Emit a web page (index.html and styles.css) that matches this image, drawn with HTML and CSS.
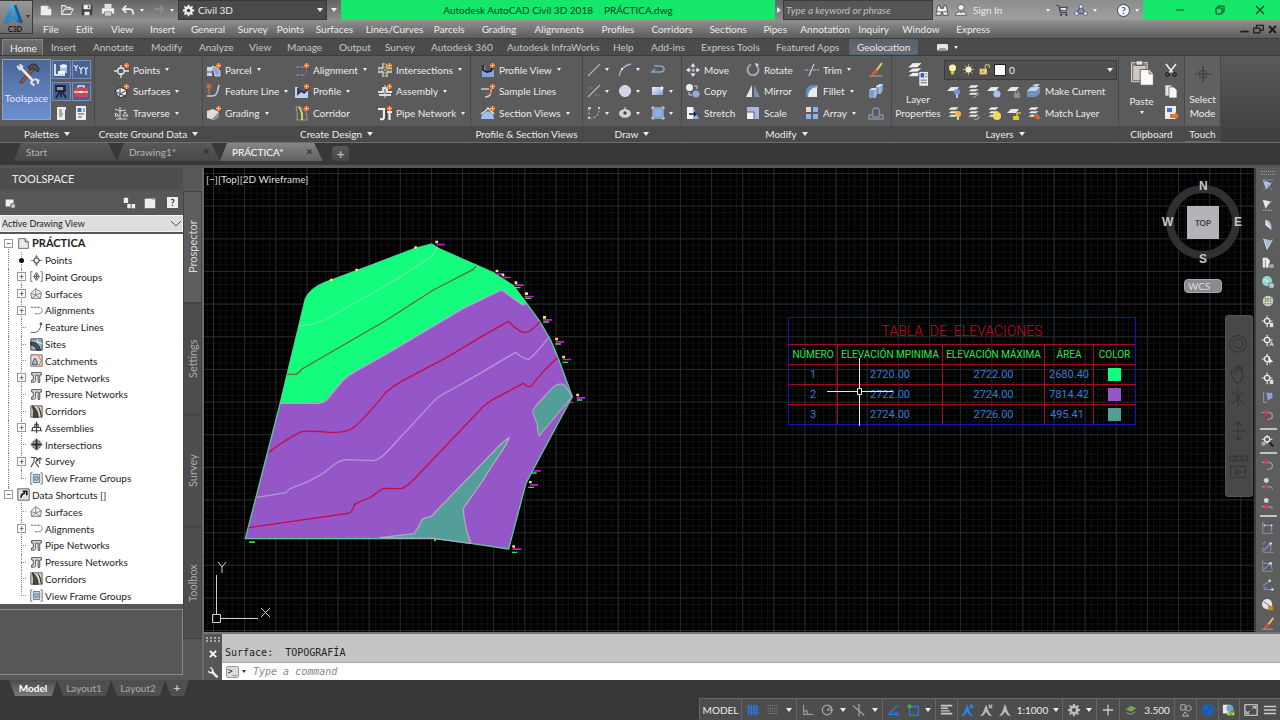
FILE: index.html
```html
<!DOCTYPE html>
<html lang="en">
<head>
<meta charset="utf-8">
<title>Autodesk AutoCAD Civil 3D 2018 - PRÁCTICA.dwg</title>
<meta name="viewport" content="width=device-width, initial-scale=1">
<link rel="stylesheet" href="styles.css">
</head>
<body>
<svg class="sprite" aria-hidden="true">
  <defs>
    <g id="spark"><circle cx="12.5" cy="3.5" r="2.6" fill="#e8641b"/><path d="M12.5 1v5M10 3.5h5" stroke="#ffc79b" stroke-width=".8"/></g>
    <linearGradient id="blue" x1="0" y1="0" x2="1" y2="1"><stop offset="0" stop-color="#f1f4fc"/><stop offset="1" stop-color="#7f9bd0"/></linearGradient>
    <linearGradient id="logo" x1="0" y1="0" x2="0" y2="1"><stop offset="0" stop-color="#4fb4e6"/><stop offset="1" stop-color="#1562a3"/></linearGradient>
  </defs>
  <symbol id="new" viewBox="0 0 16 16"><path d="M2 3h8l4 4v7H2z" fill="#eee"/><path d="M10 3v4h4" fill="#aaa"/></symbol>
  <symbol id="open" viewBox="0 0 16 16"><path d="M2 13V3h4l1 2h5v2M2 13l3-6h10l-3 6z" fill="#777" stroke="#e6e6e6" stroke-width="1.2"/></symbol>
  <symbol id="save" viewBox="0 0 16 16"><path d="M2 2h12v12H2z" fill="#3e3e3e"/><path d="M4 2h8v5H4zM5 10h6v4H5z" fill="#eee"/><path d="M9 3h1.500v3H9z" fill="#444"/></symbol>
  <symbol id="print" viewBox="0 0 16 16"><path d="M4 1h8v5H4z" fill="#ddd"/><path d="M1 6h14v6H1z" fill="#efefef"/><path d="M4 10h8v5H4z" fill="#cfcfcf" stroke="#666" stroke-width=".7"/></symbol>
  <symbol id="undo" viewBox="0 0 16 16"><path d="M6 3L2 7l4 4M2.500 7H10q4 0 4 6" fill="none" stroke="#eee" stroke-width="2"/></symbol>
  <symbol id="redo" viewBox="0 0 16 16"><path d="M10 3l4 4-4 4M13.500 7H4" fill="none" stroke="#8d8d8d" stroke-width="2"/></symbol>
  <symbol id="gear" viewBox="0 0 16 16"><circle cx="8" cy="8" r="3.800" fill="none" stroke="currentColor" stroke-width="3"/><path d="M8 1v3M8 12v3M1 8h3M12 8h3M3 3l2 2M11 11l2 2M13 3l-2 2M5 11l-2 2" stroke="currentColor" stroke-width="2.200"/></symbol>
  <symbol id="binoc" viewBox="0 0 16 16"><path d="M3 3h3v3h4V3h3l2 11H9v-4H7v4H1z" fill="#f0f0f5" stroke="#444" stroke-width="1"/><path d="M2.500 10H6M10 10h3.500" stroke="#444"/></symbol>
  <symbol id="user" viewBox="0 0 16 16"><circle cx="8" cy="5" r="3.500" fill="#f2f2f2" stroke="#555"/><path d="M1.500 14q0-3.500 4.500-4l2 1 2-1q4.500.5 4.500 4z" fill="#f2f2f2" stroke="#555"/></symbol>
  <symbol id="cart" viewBox="0 0 16 16"><path d="M1 3h3l2 8h8M5 5h9l-1.500 4H6z" fill="#dfe3ef" stroke="#444a60" stroke-width="1.300"/><circle cx="7" cy="13.500" r="1.300" fill="#333"/><circle cx="13" cy="13.500" r="1.300" fill="#333"/></symbol>
  <symbol id="a360" viewBox="0 0 16 16"><path d="M8 3.500L3 12h10z" fill="none" stroke="#505b80" stroke-width="1.600"/><circle cx="8" cy="4" r="2.200" fill="#e7eaf4" stroke="#505b80"/><circle cx="3" cy="12" r="2.200" fill="#e7eaf4" stroke="#505b80"/><circle cx="13" cy="12" r="2.200" fill="#e7eaf4" stroke="#505b80"/></symbol>
  <symbol id="min" viewBox="0 0 16 16"><path d="M4 8h8" stroke="currentColor"/></symbol>
  <symbol id="restore" viewBox="0 0 16 16"><path d="M4 6h6v6H4zM6 6V4h6v6h-2" fill="none" stroke="currentColor"/></symbol>
  <symbol id="close" viewBox="0 0 16 16"><path d="M4 4l8 8M12 4l-8 8" stroke="currentColor" stroke-width="1.200"/></symbol>
  <symbol id="min-b" viewBox="0 0 16 16"><path d="M2 11h12" stroke="currentColor" stroke-width="2.500"/></symbol>
  <symbol id="restore-b" viewBox="0 0 16 16"><path d="M1 6h9v7H1zM5 6V2h10v7h-5" fill="none" stroke="currentColor" stroke-width="1.800"/></symbol>
  <symbol id="close-b" viewBox="0 0 16 16"><path d="M3 3l10 10M13 3L3 13" stroke="currentColor" stroke-width="3"/></symbol>

  <symbol id="tools" viewBox="0 0 32 32"><path d="M8 27L24 9" stroke="#5d2b20" stroke-width="4"/><path d="M9 26L23 10" stroke="#a75a44" stroke-width="2"/><path d="M17 7l5-3h5l4 5-1 4-4-1-3-3-3 2z" fill="#4c4c50" stroke="#25252a"/><path d="M7 7l17 18" stroke="#4e5462" stroke-width="5"/><path d="M7 7l17 18" stroke="#e5e8ee" stroke-width="3.500"/><path d="M4 6l3 4 3-3-3-3M23 22l-2 5 4 3M25 22l5 2-1 4" fill="none" stroke="#dfe3ea" stroke-width="2.600"/></symbol>
  <symbol id="p1" viewBox="0 0 16 16"><path d="M2 2v11h3M3 13h9" stroke="#fff" stroke-width="1.500" fill="none"/><path d="M7 4h7v7H7z" fill="#9cc6ee"/><ellipse cx="10.500" cy="4" rx="3.500" ry="1.800" fill="#f0f6ff"/><path d="M5 9h7v3H5z" fill="#fff"/></symbol>
  <symbol id="p2" viewBox="0 0 16 16"><path d="M1 3l2 2.500L5 3M3 5v4M6 5l2 2.500L10 5M8 7v5M11 5l2 2.500L15 5M13 7v6" stroke="#e8eefc" stroke-width="1.200" fill="none"/></symbol>
  <symbol id="p3" viewBox="0 0 16 16"><path d="M3 3h8v5H3zM12 2v7M7 8L3 15M8 8v6M9 8l4 7" stroke="#20263a" stroke-width="1.800" fill="#99a"/></symbol>
  <symbol id="p4" viewBox="0 0 16 16"><path d="M1 5h14v9H1z" fill="#c64a50"/><path d="M5 5V3h6v2M1 9h14" stroke="#f1d2d2" stroke-width="1.300" fill="none"/><path d="M6 8h4v2H6z" fill="#fff"/></symbol>
  <symbol id="p5" viewBox="0 0 16 16"><path d="M4 2h9v3h-1v10H4z" fill="#ececec"/><path d="M6 5h3M6 7h3M6 9h4M6 11h3" stroke="#666"/></symbol>
  <symbol id="p6" viewBox="0 0 16 16"><path d="M3 1h10v14H3z" fill="#eceff5"/><path d="M4.500 3h4v4h-4z" fill="#3a6cc0"/><path d="M10 4h2M10 6h2M5 9h6M5 12h4" stroke="#555"/></symbol>

  <symbol id="points" viewBox="0 0 16 16"><circle cx="7" cy="9" r="3.200" fill="none" stroke="#e6e6e6" stroke-width="1.400"/><path d="M7 3v4M7 11v5M0 9h4M10 9h5" stroke="#e6e6e6" stroke-width="1.300"/><use href="#spark"/></symbol>
  <symbol id="surf" viewBox="0 0 16 16"><path d="M1 8l5-4 7 3-1 6-7 2z" fill="#e3e6ec" stroke="#333"/><path d="M6 4v7l7-4M1 8l5 3-1 4M6 11l6 2" stroke="#444" fill="none"/><use href="#spark"/></symbol>
  <symbol id="trav" viewBox="0 0 16 16"><path d="M1 4l5 2 6-1M6 2v12M2 14h11M2 8l-1 3h4zM11 7l-2 4h5z" fill="none" stroke="#d9d9d9"/></symbol>
  <symbol id="parcel" viewBox="0 0 16 16"><path d="M1 5h5v9H1z" fill="#c8d5ec"/><path d="M6 4q6 1 8 5v5H9q0-5-3-7z" fill="#8da6d8" stroke="#eee" stroke-width=".8"/><path d="M1 10h5" stroke="#555"/><use href="#spark"/></symbol>
  <symbol id="feat" viewBox="0 0 16 16"><path d="M1 13h5q5 0 6-7l1-4" fill="none" stroke="#c9ccd4" stroke-width="1.600"/><circle cx="3" cy="3.500" r="2.400" fill="#e8641b"/><path d="M3 6v5" stroke="#9a9a9a"/></symbol>
  <symbol id="grad" viewBox="0 0 16 16"><path d="M1 6l6-2 6 3v5l-5 3-7-2z" fill="#dcdcdc"/><path d="M6 14l7-7v5l-5 3z" fill="#8d8d8d"/><use href="#spark"/></symbol>
  <symbol id="align" viewBox="0 0 16 16"><path d="M2 5h8M2 13h8" stroke="#7789c9" stroke-width="1.300" stroke-dasharray="3 1.500"/><path d="M10 5q5 4 0 8" fill="none" stroke="#7789c9" stroke-dasharray="2 1.500"/><use href="#spark"/></symbol>
  <symbol id="prof" viewBox="0 0 16 16"><path d="M1 4v11h13V6l-4 4-3-2-3 3V4z" fill="#bcd0f2"/><path d="M4 5v6l3-3 3 2 4-4" stroke="#222b44" stroke-width="1.500" fill="none"/><use href="#spark"/></symbol>
  <symbol id="corr" viewBox="0 0 16 16"><path d="M2 2h4q8 4 7 13H3Q4 8 2 2z" fill="#555c60" stroke="#a0a0a0"/><path d="M5 2q4 5 3 13" stroke="#e9d84c" stroke-width="1.800" fill="none"/><use href="#spark"/></symbol>
  <symbol id="inter" viewBox="0 0 16 16"><path d="M6 1v5H1M10 7V2M6 15v-5H1M10 15v-5h5M10 6h5" fill="none" stroke="#d7d7d7" stroke-width="1.300"/><path d="M8 1v14M1 8h14" stroke="#b8c06a" stroke-dasharray="2 1"/><use href="#spark"/></symbol>
  <symbol id="assem" viewBox="0 0 16 16"><path d="M1 9h5V5h4v4h5M2 12h12" fill="none" stroke="#dcdcdc" stroke-width="2"/><path d="M8 2v13" stroke="#dcdcdc"/><use href="#spark"/></symbol>
  <symbol id="pipe" viewBox="0 0 16 16"><path d="M1 4h6v8q0 3-4 2M10 7h5M12.500 7v8" fill="none" stroke="#efefef" stroke-width="2.200"/><path d="M9 5v10" stroke="#333"/><use href="#spark"/></symbol>
  <symbol id="pview" viewBox="0 0 16 16"><path d="M2 3v12h12V7l-4 3-4-1-2-6z" fill="#7fa6e2"/><path d="M3 3v5l4 2 4-1 2-4" fill="none" stroke="#15203a" stroke-width="1.800"/><use href="#spark"/></symbol>
  <symbol id="sline" viewBox="0 0 16 16"><path d="M1 6h8M5 14q7 0 6-8" fill="none" stroke="#d0d0d0" stroke-width="1.300"/><path d="M5 10h8" stroke="#c44" stroke-width="1.300"/><use href="#spark"/></symbol>
  <symbol id="sview" viewBox="0 0 16 16"><path d="M1 14q0-6 7-8 6 2 6 8z" fill="#9fbdee"/><path d="M1 9q5-3 7-6 3 3 6 6" fill="none" stroke="#fff" stroke-width="1.300"/><use href="#spark"/></symbol>

  <symbol id="line" viewBox="0 0 16 16"><path d="M2 14L14 2" stroke="#a9b0c0" stroke-width="1.200"/></symbol>
  <symbol id="arc" viewBox="0 0 16 16"><path d="M2 14Q4 4 14 2" fill="none" stroke="#a9b5d6" stroke-width="1.300"/><circle cx="5" cy="7" r="1" fill="#fff"/></symbol>
  <symbol id="pline" viewBox="0 0 16 16"><path d="M4 4h6q4 0 4 3t-4 3H2l3-3" fill="none" stroke="#8e9ecb" stroke-width="1.700"/></symbol>
  <symbol id="xline" viewBox="0 0 16 16"><path d="M2 14L14 2" stroke="#b5b5b5" stroke-width="1.200"/><path d="M2 5h5M9 12h5" stroke="#999" stroke-dasharray="1.500 1.500"/></symbol>
  <symbol id="circ" viewBox="0 0 16 16"><circle cx="8" cy="8" r="5.500" fill="#d2d2ea" stroke="#f2f2fa" stroke-width=".8"/></symbol>
  <symbol id="rect" viewBox="0 0 16 16"><path d="M2 4h11v8H2z" fill="url(#blue)"/><path d="M11 3l3 2-3 2z" fill="#fff"/></symbol>
  <symbol id="spl" viewBox="0 0 16 16"><path d="M3 4v9h4q6-2 6-9" fill="none" stroke="#b0b0b0" stroke-dasharray="2 1.500" stroke-width="1.200"/><path d="M2 2h3v2H2zM12 2h2v2h-2zM2 12h2v2H2z" fill="#ccc"/></symbol>
  <symbol id="ell" viewBox="0 0 16 16"><ellipse cx="8" cy="8.500" rx="6" ry="4.200" fill="#d2d2e2"/><circle cx="8" cy="8" r="1.700" fill="#444"/><path d="M8 2v4" stroke="#ddd"/></symbol>
  <symbol id="hatch" viewBox="0 0 16 16"><path d="M4 4h8v8H4z" fill="#86b0ea"/><path d="M3 1v14M13 1v14M1 3h14M1 13h14" stroke="#cfd9ee"/></symbol>

  <symbol id="move" viewBox="0 0 16 16"><path d="M8 3v10M3 8h10" stroke="#b9c3d8" stroke-width="1.300" stroke-dasharray="3 1"/><path d="M8 1l2.500 3.500h-5zM8 15l2.500-3.500h-5zM1 8l3.500-2.500v5zM15 8l-3.500-2.500v5z" fill="#e0e4ee"/></symbol>
  <symbol id="copy" viewBox="0 0 16 16"><circle cx="4.500" cy="4.500" r="3.500" fill="#f0f0f4"/><circle cx="11" cy="11" r="3.600" fill="#92a9d6"/><path d="M4 9v3h3M9 3h3v3" stroke="#ccd" fill="none"/></symbol>
  <symbol id="stretch" viewBox="0 0 16 16"><path d="M2 2h6v12H2z" fill="#f2f4f8"/><path d="M8 2l6 12H8z" fill="#8fb0e6"/><path d="M4 9h7M9 7l2 2-2 2" stroke="#223" fill="none" stroke-width="1.300"/></symbol>
  <symbol id="rotate" viewBox="0 0 16 16"><path d="M6 2.500a5.500 5.500 0 1 0 5 .5" fill="none" stroke="#a9adb8" stroke-width="1.800"/><path d="M10 1l4 1-2.500 3z" fill="#d0d4df"/></symbol>
  <symbol id="mirror" viewBox="0 0 16 16"><path d="M7 2v12H1z" fill="#e5e7ee"/><path d="M9 2v12h6z" fill="#7e8eb2"/></symbol>
  <symbol id="scale" viewBox="0 0 16 16"><path d="M2 2h12v12H2z" fill="#a9b6df"/><path d="M2 7h7v7H2z" fill="#eceff8"/><path d="M2 7h7v7" fill="none" stroke="#5c6480"/></symbol>
  <symbol id="trim" viewBox="0 0 16 16"><path d="M1 8h5M9 8h6" stroke="#8b99c6" stroke-width="1.300" stroke-dasharray="3 1"/><path d="M5 14l5-12" stroke="#c3c8d8" stroke-width="1.300"/></symbol>
  <symbol id="fillet" viewBox="0 0 16 16"><path d="M2 14V10q0-8 8-8h4v3Q8 5 6 14z" fill="#6d8cc4"/><path d="M4 14q0-9 9-10v10z" fill="#e8eaf2"/></symbol>
  <symbol id="array" viewBox="0 0 16 16"><path d="M2 2h5v5H2z" fill="#ead7cc"/><path d="M9 2h5v5H9zM2 9h5v5H2zM9 9h5v5H9z" fill="#8fb3ec"/></symbol>
  <symbol id="erase" viewBox="0 0 16 16"><path d="M14 1L8 9" stroke="#f0c96a" stroke-width="2"/><path d="M8 7l2 2-4 4-3 1 1-3z" fill="#e05a28"/><path d="M1 14h13" stroke="#aaa"/></symbol>
  <symbol id="explode" viewBox="0 0 16 16"><path d="M1 7l3-2h4V3l4-2h3v7l-3 3H9v2l-2 2H1z" fill="#7f9cca"/><path d="M1 7l3-2h5l-2 2zM8 3l4-2h3l-3 3H8z" fill="#d3dff2"/><path d="M7 7v8M12 4v7" stroke="#dde6f5" stroke-width=".8"/></symbol>
  <symbol id="offset" viewBox="0 0 16 16"><path d="M1 14v-4h4q-2-7 3-7t3 7h4v4z" fill="none" stroke="#8791b5" stroke-width="1.400"/><path d="M4 12h8" stroke="#aab"/></symbol>

  <symbol id="layerp" viewBox="0 0 32 32"><path d="M4 9l6-6h11l-6 6zM4 14l6-5h11l-6 5zM4 19l6-5h11l-6 5z" fill="#f0f0f0" stroke="#444" stroke-width=".8"/><path d="M17 13h11v17H17z" fill="#e7eaf2" stroke="#555"/><path d="M19 15h4v5h-4z" fill="#2f5fb5"/><path d="M24.500 16h2M24.500 19h2M19 23h7M19 26h7" stroke="#555"/></symbol>
  <symbol id="bulb" viewBox="0 0 16 16"><circle cx="8" cy="6" r="4.300" fill="#fdf3a2"/><path d="M6 10h4v4H6z" fill="#d8c565"/></symbol>
  <symbol id="sun" viewBox="0 0 16 16"><path d="M8 1v14M1 8h14M3 3l10 10M13 3L3 13" stroke="#c8bb8a"/><circle cx="8" cy="8" r="3.800" fill="#f7efc0"/></symbol>
  <symbol id="lock" viewBox="0 0 16 16"><path d="M2 7h9v7H2z" fill="#e5cf74"/><path d="M9 7V4q0-2 2.500-2T14 4v2" fill="none" stroke="#c9b25c" stroke-width="1.500"/><path d="M6 9v3" stroke="#554"/></symbol>
  <symbol id="ly" viewBox="0 0 16 16"><path d="M1 8l4-4h8l-3 4z" fill="#e8e8e8"/></symbol>
  <symbol id="ls" viewBox="0 0 16 16"><path d="M2 5l3-3h8l-3 3zM2 8.500l3-2.500h8l-3 2.500zM2 12l3-2.500h8L10 12z" fill="#ececec" stroke="#555" stroke-width=".5"/></symbol>
  <symbol id="l1" viewBox="0 0 16 16"><use href="#ly"/><circle cx="11" cy="9" r="3" fill="#6f97d8"/><path d="M11 11v4" stroke="#b8c8e8" stroke-width="2"/></symbol>
  <symbol id="l2" viewBox="0 0 16 16"><use href="#ls"/><path d="M7 15l6-4" stroke="#8898c0" stroke-width="1.500"/></symbol>
  <symbol id="l3" viewBox="0 0 16 16"><use href="#ly"/><circle cx="11" cy="11" r="3.500" fill="#a7c2ee"/></symbol>
  <symbol id="l4" viewBox="0 0 16 16"><use href="#ly"/><path d="M8 10h6v5H8z" fill="#7d9489"/><path d="M9.500 10V8h3v2" stroke="#7d9489" fill="none"/></symbol>
  <symbol id="l5" viewBox="0 0 16 16"><path d="M1 8l4-4h9v6l-4 4H1z" fill="#7391bd"/><path d="M1 8l4-4h9l-4 4zM6 3l3-2h5l-3 3z" fill="#c5d3ea"/></symbol>
  <symbol id="l6" viewBox="0 0 16 16"><use href="#ls"/><circle cx="12" cy="9" r="3" fill="#f0b548"/><path d="M12 11v4" stroke="#e6cf99" stroke-width="2"/></symbol>
  <symbol id="l7" viewBox="0 0 16 16"><use href="#ls"/><path d="M8 14q5 1 5-3" fill="none" stroke="#7e92cd" stroke-width="1.500"/></symbol>
  <symbol id="l8" viewBox="0 0 16 16"><use href="#ls"/><circle cx="11" cy="11" r="4" fill="#f6dc5c"/></symbol>
  <symbol id="l9" viewBox="0 0 16 16"><use href="#ly"/><path d="M7 11h6v4H7z" fill="#e0c52f"/><path d="M11 11V8h4" stroke="#e0c52f" stroke-width="1.500" fill="none"/></symbol>
  <symbol id="l10" viewBox="0 0 16 16"><use href="#ls"/><path d="M8 9h3l4 4-3 2-4-3z" fill="#c8663a"/></symbol>
  <symbol id="paste" viewBox="0 0 32 32"><path d="M4 4h18v22H4z" fill="#8b8078" stroke="#ddd"/><path d="M9 2h8v5H9z" fill="#e4e4e4" stroke="#444"/><path d="M6 8h14v16H6z" fill="#cfc8c2"/><path d="M14 12h10l5 5v13H14z" fill="#fafafa" stroke="#555"/><path d="M24 12v5h5" fill="#ccc" stroke="#777"/></symbol>
  <symbol id="cut" viewBox="0 0 16 16"><path d="M3 2l7 9M13 2L6 11" stroke="#eee" stroke-width="1.600"/><circle cx="4.500" cy="12.500" r="1.800" fill="none" stroke="#222" stroke-width="1.300"/><circle cx="11.500" cy="12.500" r="1.800" fill="none" stroke="#222" stroke-width="1.300"/></symbol>
  <symbol id="copyc" viewBox="0 0 16 16"><path d="M2 2h7v11H2z" fill="#e3e3e3" stroke="#555" stroke-width=".6"/><path d="M6 4h5l3 3v8H6z" fill="#fafafa" stroke="#555" stroke-width=".7"/></symbol>
  <symbol id="pspec" viewBox="0 0 16 16"><path d="M2 1h11v13H2z" fill="#e8ebf2"/><path d="M4 3h5v4H4z" fill="#4674bd"/><path d="M7 9h5v-2l4 4-4 4v-2H7z" fill="#e07a30"/></symbol>
  <symbol id="touch" viewBox="0 0 32 32"><path d="M16 6v20M6 16h20" stroke="#3c3c3c" stroke-width="1.500"/><path d="M12 12h8v8h-8z" fill="none" stroke="#3c3c3c"/></symbol>

  <symbol id="t-dwg" viewBox="0 0 16 16"><path d="M2 2h8l4 4v8H2z" fill="#e9e9e9" stroke="#555"/><path d="M10 2v4h4" fill="#bbb" stroke="#555"/></symbol>
  <symbol id="t-pt" viewBox="0 0 16 16"><path d="M8 2l4 6-4 6-4-6z" fill="none" stroke="#555"/><path d="M8 1v14M1 8h14" stroke="#666"/><circle cx="8" cy="8" r="3" fill="#eee" stroke="#444"/></symbol>
  <symbol id="t-pg" viewBox="0 0 16 16"><path d="M3 2H1v12h2M13 2h2v12h-2" fill="none" stroke="#555"/><path d="M8 3l3.500 5L8 13 4.500 8z" fill="#ddd" stroke="#444"/><path d="M8 5v6M5 8h6" stroke="#444"/></symbol>
  <symbol id="t-sf" viewBox="0 0 16 16"><path d="M1 8l6-6 7 5-1 7H2z" fill="#eee" stroke="#666"/><path d="M1 8l6 2 7-3M7 2v8l-5 4M7 10l6 4" fill="none" stroke="#777"/></symbol>
  <symbol id="t-al" viewBox="0 0 16 16"><path d="M1 4h9q5 0 5 4t-5 4H6" fill="none" stroke="#666" stroke-width="1.200" stroke-dasharray="3 1"/></symbol>
  <symbol id="t-fl" viewBox="0 0 16 16"><path d="M1 14h5q6 0 8-11" fill="none" stroke="#555" stroke-width="1.200"/><path d="M12 2h3v3h-3z" fill="#555"/></symbol>
  <symbol id="t-si" viewBox="0 0 16 16"><path d="M1 1h14v14H1z" fill="#8fb4d6" stroke="#333"/><path d="M1 5q10 0 12 10H8Q7 9 1 9z" fill="#4a5648" stroke="#222"/><path d="M9 1v4l6 2" stroke="#fff" fill="none"/></symbol>
  <symbol id="t-ca" viewBox="0 0 16 16"><path d="M1 1h14v14H1z" fill="#f0d9cc" stroke="#555"/><path d="M6 5q4 4 3 8H3q0-4 3-8z" fill="#8cbbe8" stroke="#345"/><path d="M10 2l4 6-3 6" stroke="#c2532c" fill="none"/></symbol>
  <symbol id="t-pn" viewBox="0 0 16 16"><path d="M2 2h12v3H12v9h-2V5H7v7q0 2-5 2v-3h2V5H2z" fill="#ddd" stroke="#333"/></symbol>
  <symbol id="t-co" viewBox="0 0 16 16"><path d="M1 1h14v14H1z" fill="#ddd6c5" stroke="#444"/><path d="M3 1q7 5 7 14H4Q5 8 3 1zM10 2q4 5 4 13" fill="#454a44" stroke="#222"/></symbol>
  <symbol id="t-as" viewBox="0 0 16 16"><path d="M1 12h14M3 8h10M6 4h4v4H6zM8 1v14M3 8v4M13 8v4" fill="none" stroke="#444" stroke-width="1.500"/></symbol>
  <symbol id="t-in" viewBox="0 0 16 16"><circle cx="8" cy="8" r="6" fill="#555"/><path d="M6 0v6H0M10 0v6h6M6 16v-6H0M10 16v-6h6" stroke="#ddd" fill="none"/><path d="M8 1v14M1 8h14" stroke="#333" stroke-width="2"/></symbol>
  <symbol id="t-su" viewBox="0 0 16 16"><path d="M1 3h6l2 2h6M5 4v4l-4 7M9 5l-2 5 4 5M7 9l6-6M12 6v5" fill="none" stroke="#444" stroke-width="1.300"/></symbol>
  <symbol id="t-vf" viewBox="0 0 16 16"><path d="M3 1H1v14h2M13 1h2v14h-2" fill="none" stroke="#456"/><path d="M4 3h8v10H4z" fill="#b9d3ea" stroke="#567"/><path d="M6 6h4v4H6z" fill="none" stroke="#567"/></symbol>
  <symbol id="t-sc" viewBox="0 0 16 16"><path d="M1 1h14v14H1z" fill="#e2e2e2" stroke="#444"/><path d="M5 12q0-5 5-6M7 4h5v5" fill="none" stroke="#111" stroke-width="2"/></symbol>

  <symbol id="r1" viewBox="0 0 16 16"><path d="M2 1l10 4-6 7z" fill="#c5cdea"/><path d="M2 13L13 3M2 1h12M2 1l11 12" stroke="#7f8fc4"/></symbol>
  <symbol id="r2" viewBox="0 0 16 16"><path d="M2 2l3 10 6-8z" fill="#e4e6ee"/><path d="M5 12L13 3M2 14h12" stroke="#b5b9c8" stroke-dasharray="2 1"/></symbol>
  <symbol id="r3" viewBox="0 0 16 16"><path d="M5 2q8 1 7 12l-5-4z" fill="#b4c0e6"/><path d="M5 2v6l6 4" fill="#e9ebf4"/></symbol>
  <symbol id="r4" viewBox="0 0 16 16"><path d="M3 2l9 2-5 10z" fill="#a7b5db"/><path d="M3 2l4 12 6-11" stroke="#e5e7f2" fill="none"/></symbol>
  <symbol id="r5" viewBox="0 0 16 16"><path d="M2 2h5l3 3v8H2z" fill="#f0f0f0"/><path d="M9 9h6v5H9z" fill="#aaa" stroke="#444" stroke-width=".6"/><path d="M5 4v9" stroke="#777"/></symbol>
  <symbol id="r6" viewBox="0 0 16 16"><circle cx="7" cy="7" r="5.800" fill="#8fd6cf"/><path d="M3 5q4 0 6 4" stroke="#e8fff9" fill="none"/><path d="M9 9h6v6H9z" fill="#cbd" stroke="#444" stroke-width=".6"/></symbol>
  <symbol id="r7" viewBox="0 0 16 16"><circle cx="8" cy="8" r="6" fill="#dfe7dc"/><path d="M8 2v12M2 8h12M3 5h10M3 11h10M5 3v10M11 3v10" stroke="#7c8d7c" stroke-width=".8"/><path d="M5 5h3v3H5z" fill="#8fb440"/></symbol>
  <symbol id="r8" viewBox="0 0 16 16"><circle cx="7" cy="8" r="3" fill="none" stroke="#eee" stroke-width="1.400"/><path d="M7 2v3M7 11v4M1 8h3M10 8h3" stroke="#eee" stroke-width="1.300"/><path d="M10 10h4v5h-4z" fill="#ddd"/></symbol>
  <symbol id="r9" viewBox="0 0 16 16"><circle cx="7" cy="8" r="3" fill="none" stroke="#eee" stroke-width="1.400"/><path d="M7 2v3M7 11v4M1 8h3M10 8h3" stroke="#eee" stroke-width="1.300"/><path d="M10 15l2-5 2 5M11 13h2" stroke="#eee" fill="none"/></symbol>
  <symbol id="r10" viewBox="0 0 16 16"><circle cx="7" cy="8" r="3" fill="none" stroke="#eee" stroke-width="1.400"/><path d="M7 2v3M7 11v4M1 8h3" stroke="#eee" stroke-width="1.300"/><path d="M8 6l6 5-3 .500-1 3z" fill="#fff"/></symbol>
  <symbol id="r11" viewBox="0 0 16 16"><circle cx="7" cy="6" r="3" fill="none" stroke="#eee" stroke-width="1.400"/><path d="M7 1v3M7 8v3M1 6h3M10 6h3" stroke="#eee" stroke-width="1.300"/><circle cx="3" cy="11" r="2.500" fill="#aaa"/><path d="M10 10l4 4" stroke="#1c1c1c" stroke-width="2.500"/></symbol>
  <symbol id="r12" viewBox="0 0 16 16"><path d="M3 3v11M3 14h4" stroke="#b7bfdd" stroke-dasharray="2 1"/><path d="M6 3h7v6l-5 3z" fill="#8ba1d9"/></symbol>
  <symbol id="r13" viewBox="0 0 16 16"><path d="M1 4h8q4 0 4 4t-6 4" fill="none" stroke="#a3a3a3" stroke-width="1.300"/><path d="M6 4v10" stroke="#b52c36" stroke-width="1.500"/><circle cx="6" cy="4" r="2.200" fill="#e4374a"/></symbol>
  <symbol id="r14" viewBox="0 0 16 16"><path d="M1 5h8q4 0 4 4t-6 4" fill="none" stroke="#a3a3a3" stroke-width="1.300"/><circle cx="6" cy="5" r="2.200" fill="#e4374a"/></symbol>
  <symbol id="r15" viewBox="0 0 16 16"><path d="M1 11h8q4 0 4 3" fill="none" stroke="#8aa0b2" stroke-width="1.300"/><circle cx="6" cy="4" r="2.800" fill="#d5d5d5"/><circle cx="6" cy="11" r="2.200" fill="#e4374a"/></symbol>
  <symbol id="r16" viewBox="0 0 16 16"><path d="M2 1v13h12" fill="none" stroke="#b6b6c8" stroke-dasharray="2 1"/><path d="M4 5h8v7" stroke="#7d8ccc" fill="none" stroke-width="1.400"/><path d="M3 4h2v2H3zM11 4h2v2h-2z" fill="#dde"/></symbol>
  <symbol id="r17" viewBox="0 0 16 16"><path d="M2 9v5h12" fill="none" stroke="#b6b6c8" stroke-dasharray="2 1"/><path d="M3 12l8-8v8M2 5l3-3" stroke="#7d8ccc" fill="none" stroke-width="1.400"/><circle cx="11" cy="4" r="1.500" fill="#dde"/></symbol>
  <symbol id="r18" viewBox="0 0 16 16"><circle cx="7" cy="7" r="5.800" fill="#e4e4e4"/><path d="M3 4l8 6" stroke="#666"/><path d="M8 9h6v5H8z" fill="#c98432"/></symbol>
  <symbol id="r19" viewBox="0 0 16 16"><path d="M2 2v12h12" fill="none" stroke="#b6b6c8" stroke-dasharray="2 1"/><path d="M3 5h8l2 7M3 12l8-7" stroke="#7d8ccc" fill="none" stroke-width="1.400"/><circle cx="11" cy="5" r="1.500" fill="#dde"/></symbol>
  <symbol id="r20" viewBox="0 0 16 16"><path d="M3 12h10M2 8l8-6M6 9l-3 3" stroke="#7d8ccc" fill="none" stroke-width="1.400"/><circle cx="10" cy="2" r="1.500" fill="#dde"/><circle cx="13" cy="12" r="1.500" fill="#dde"/></symbol>

  <symbol id="s-grid" viewBox="0 0 16 16"><path d="M3 2v12M6 2v12M9 2v12M12 2v12" stroke="#2b78e4" stroke-width="1.700"/><path d="M1 5h14M1 8h14M1 11h14" stroke="#2b78e4" stroke-width=".8"/></symbol>
  <symbol id="s-snap" viewBox="0 0 16 16"><path d="M2 3h12M2 6h12M2 9h12M2 12h12" stroke="#a6a6a6" stroke-dasharray="1 1.500"/></symbol>
  <symbol id="s-orth" viewBox="0 0 16 16"><path d="M3 2v11h11M3 9h4v4" fill="none" stroke="#9c9c9c" stroke-width="1.300"/></symbol>
  <symbol id="s-pol" viewBox="0 0 16 16"><circle cx="7" cy="8" r="5.500" fill="none" stroke="#aaa" stroke-width="1.300"/><path d="M7 8h7M7 8l5-4" stroke="#bbb"/></symbol>
  <symbol id="s-iso" viewBox="0 0 16 16"><path d="M1 3l13 11M8 1v14" stroke="#aaa" stroke-width="1.300"/></symbol>
  <symbol id="s-otr" viewBox="0 0 16 16"><path d="M12 3L2 13h12" fill="none" stroke="#2b78e4" stroke-width="1.500"/><path d="M8 11h4v4" fill="none" stroke="#2b78e4"/></symbol>
  <symbol id="s-osn" viewBox="0 0 16 16"><path d="M4 4h10v10H4z" fill="none" stroke="#2b78e4" stroke-width="1.500"/><circle cx="4" cy="4" r="2.500" fill="#2fae4a"/></symbol>
  <symbol id="s-lw" viewBox="0 0 16 16"><path d="M1 3h13M1 12h13" stroke="#ccc" stroke-width="2"/><path d="M1 6h8M1 9h10" stroke="#ccc" stroke-width="1.500"/></symbol>
  <symbol id="s-ann" viewBox="0 0 16 16"><path d="M8 1q2 5 2 6 1 4 5 8l-4-1-3-4-3 4-4 1q4-4 5-8 0-1 2-6z" fill="currentColor"/></symbol>
  <symbol id="s-ann2" viewBox="0 0 16 16"><path d="M7 2q2 5 2 6 1 3 5 7l-4-1-3-4-3 4-4 1q4-4 5-8 0-1 2-5z" fill="currentColor"/><path d="M10 2l4 4M14 2l-4 4" stroke="currentColor" stroke-width="1.500"/></symbol>
  <symbol id="s-plus" viewBox="0 0 16 16"><path d="M8 2v12M2 8h12" stroke="#ccc" stroke-width="1.500"/></symbol>
  <symbol id="s-elev" viewBox="0 0 16 16"><path d="M2 7l6-4 6 3-6 4z" fill="#7ea653"/><path d="M3 11l5 2 5-3" stroke="#aaa" fill="none"/></symbol>
  <symbol id="s-iso2" viewBox="0 0 16 16"><path d="M2 2h5v6H2zM7 10l4 5H4z" fill="none" stroke="#bbb"/><circle cx="11" cy="6" r="3" fill="none" stroke="#bbb"/></symbol>
  <symbol id="s-hw" viewBox="0 0 16 16"><circle cx="8" cy="8" r="7" fill="#1b67c2"/><path d="M5 11l6-6" stroke="#114a92" stroke-width="1.500"/><circle cx="8" cy="8" r="5" fill="none" stroke="#0f4f9f"/></symbol>
  <symbol id="s-map" viewBox="0 0 16 16"><path d="M1 2h8v10H1z" fill="#e7e7e7"/><circle cx="9" cy="6" r="4" fill="#6ba3d8"/><path d="M6 10h8v4H6z" fill="#d8d34e"/><path d="M8 10l2 3 4-5" stroke="#46a53a" stroke-width="1.500" fill="none"/></symbol>
  <symbol id="s-full" viewBox="0 0 16 16"><path d="M1 2h14v12H1z" fill="none" stroke="#ddd" stroke-width="1.300"/><path d="M9 7l4-3M13 7V4h-3M7 9l-4 3M3 9v3h3" stroke="#ddd" fill="none"/></symbol>
  <symbol id="s-menu" viewBox="0 0 16 16"><path d="M1 4h14M1 8h14M1 12h14" stroke="#ccc" stroke-width="1.500"/></symbol>
  <symbol id="wrench" viewBox="0 0 16 16"><path d="M13 14L6 7" stroke="#eee" stroke-width="3"/><path d="M3 2l3 2v3H3L1 5q0 5 5 4 4-2 1-6-2-2-4-1z" fill="#eee"/></symbol>
  <symbol id="ts-tree" viewBox="0 0 16 16"><path d="M2 2h5v6H2zM6 9h4v5H6zM11 9h4v5h-4z" fill="#eee"/></symbol>
  <symbol id="ts-pane" viewBox="0 0 16 16"><path d="M2 3h12v11H2z" fill="#eee"/><path d="M10 3h4" stroke="#888" stroke-width="2"/></symbol>
  <symbol id="ts-item" viewBox="0 0 16 16"><path d="M3 4h9v8H3z" fill="#eee"/><path d="M9 9h5v5H9z" fill="#ccc" stroke="#555"/></symbol>
</svg>

<div class="app">
  <button class="app-menu" aria-label="Application menu">
    <svg viewBox="0 0 32 27"><path d="M4 26L13 2h7l8 22h-7L16 9l-5 15z" fill="url(#logo)"/><path d="M8 19l14-5 2 6-14 3-6 3z" fill="#2b8fce"/><path d="M20 2l8 22-3 1L17 3z" fill="#155888"/></svg>
    <b>C3D</b><i class="car dark"></i>
  </button>

  <header class="title">
    <div class="quick">
      <button aria-label="New"><svg><use href="#new"/></svg></button>
      <button aria-label="Open"><svg><use href="#open"/></svg></button>
      <button aria-label="Save"><svg><use href="#save"/></svg></button>
      <button aria-label="Plot"><svg><use href="#print"/></svg></button>
      <button aria-label="Undo"><svg><use href="#undo"/></svg><i class="car"></i></button>
      <button aria-label="Redo"><svg><use href="#redo"/></svg><i class="car"></i></button>
    </div>
    <div class="workspace"><svg><use href="#gear"/></svg><select aria-label="Workspace"><option>Civil 3D</option></select><i class="car big"></i></div>
    <button class="more" aria-label="Customize toolbar"><i class="car big"></i></button>
    <h1><span>Autodesk AutoCAD Civil 3D 2018</span><span>PRÁCTICA.dwg</span></h1>
    <button class="play" aria-label="Collapse search"></button>
    <input class="search" type="text" placeholder="Type a keyword or phrase" aria-label="Search">
    <div class="account">
      <button aria-label="Search help"><svg><use href="#binoc"/></svg></button>
      <button class="sign"><svg><use href="#user"/></svg>Sign In<i class="car"></i></button>
      <button aria-label="App store"><svg><use href="#cart"/></svg></button>
      <button aria-label="Autodesk 360"><svg><use href="#a360"/></svg><i class="car"></i></button>
      <button class="help" aria-label="Help"><b>?</b><i class="car"></i></button>
    </div>
    <div class="win">
      <button aria-label="Minimize"><svg><use href="#min"/></svg></button>
      <button aria-label="Restore"><svg><use href="#restore"/></svg></button>
      <button aria-label="Close"><svg><use href="#close"/></svg></button>
    </div>
  </header>

  <nav class="menus">
    <button>File</button><button>Edit</button><button>View</button><button>Insert</button><button>General</button><button>Survey</button><button>Points</button><button>Surfaces</button><button>Lines/Curves</button><button>Parcels</button><button>Grading</button><button>Alignments</button><button>Profiles</button><button>Corridors</button><button>Sections</button><button>Pipes</button><button>Annotation</button><button>Inquiry</button><button>Window</button><button>Express</button>
    <div class="docwin"><button aria-label="Minimize drawing"><svg><use href="#min-b"/></svg></button><button aria-label="Restore drawing"><svg><use href="#restore-b"/></svg></button><button aria-label="Close drawing"><svg><use href="#close-b"/></svg></button></div>
  </nav>

  <nav class="tabs">
    <button class="on">Home</button><button>Insert</button><button>Annotate</button><button>Modify</button><button>Analyze</button><button>View</button><button>Manage</button><button>Output</button><button>Survey</button><button>Autodesk 360</button><button>Autodesk InfraWorks</button><button>Help</button><button>Add-ins</button><button>Express Tools</button><button>Featured Apps</button><button class="geo">Geolocation</button><button class="pill" aria-label="Minimize ribbon"><i></i><i class="car"></i></button>
  </nav>

  <section class="ribbon">
    <div class="panel palettes">
      <div class="body">
        <button class="large active"><svg><use href="#tools"/></svg>Toolspace</button>
        <button class="sq lit" aria-label="Panorama"><svg><use href="#p1"/></svg></button>
        <button class="sq lit" aria-label="Survey"><svg><use href="#p3"/></svg></button>
        <button class="sq" aria-label="Tool palettes"><svg><use href="#p5"/></svg></button>
        <button class="sq lit" aria-label="Prospector"><svg><use href="#p2"/></svg></button>
        <button class="sq lit" aria-label="Toolbox"><svg><use href="#p4"/></svg></button>
        <button class="sq" aria-label="Properties"><svg><use href="#p6"/></svg></button>
      </div>
      <h2>Palettes<i class="car big"></i></h2>
    </div>
    <div class="panel ground">
      <div class="body">
        <button class="cmd"><svg><use href="#points"/></svg>Points<i class="car"></i></button>
        <button class="cmd"><svg><use href="#surf"/></svg>Surfaces<i class="car"></i></button>
        <button class="cmd"><svg><use href="#trav"/></svg>Traverse<i class="car"></i></button>
      </div>
      <h2>Create Ground Data<i class="car big"></i></h2>
    </div>
    <div class="panel design">
      <div class="body">
        <button class="cmd"><svg><use href="#parcel"/></svg>Parcel<i class="car"></i></button>
        <button class="cmd"><svg><use href="#feat"/></svg>Feature Line<i class="car"></i></button>
        <button class="cmd"><svg><use href="#grad"/></svg>Grading<i class="car"></i></button>
        <button class="cmd"><svg><use href="#align"/></svg>Alignment<i class="car"></i></button>
        <button class="cmd"><svg><use href="#prof"/></svg>Profile<i class="car"></i></button>
        <button class="cmd"><svg><use href="#corr"/></svg>Corridor</button>
        <button class="cmd"><svg><use href="#inter"/></svg>Intersections<i class="car"></i></button>
        <button class="cmd"><svg><use href="#assem"/></svg>Assembly<i class="car"></i></button>
        <button class="cmd"><svg><use href="#pipe"/></svg>Pipe Network<i class="car"></i></button>
      </div>
      <h2>Create Design<i class="car big"></i></h2>
    </div>
    <div class="panel views">
      <div class="body">
        <button class="cmd"><svg><use href="#pview"/></svg>Profile View<i class="car"></i></button>
        <button class="cmd"><svg><use href="#sline"/></svg>Sample Lines</button>
        <button class="cmd"><svg><use href="#sview"/></svg>Section Views<i class="car"></i></button>
      </div>
      <h2>Profile &amp; Section Views</h2>
    </div>
    <div class="panel draw">
      <div class="body">
        <button class="cmd" aria-label="Line"><svg><use href="#line"/></svg><i class="car"></i></button>
        <button class="cmd" aria-label="Construction line"><svg><use href="#xline"/></svg><i class="car"></i></button>
        <button class="cmd" aria-label="Polyline"><svg><use href="#spl"/></svg><i class="car"></i></button>
        <button class="cmd" aria-label="Arc"><svg><use href="#arc"/></svg><i class="car"></i></button>
        <button class="cmd" aria-label="Circle"><svg><use href="#circ"/></svg><i class="car"></i></button>
        <button class="cmd" aria-label="Ellipse"><svg><use href="#ell"/></svg><i class="car"></i></button>
        <button class="cmd" aria-label="Curve"><svg><use href="#pline"/></svg></button>
        <button class="cmd" aria-label="Rectangle"><svg><use href="#rect"/></svg><i class="car"></i></button>
        <button class="cmd" aria-label="Hatch"><svg><use href="#hatch"/></svg><i class="car"></i></button>
      </div>
      <h2>Draw<i class="car big"></i></h2>
    </div>
    <div class="panel modify">
      <div class="body">
        <button class="cmd"><svg><use href="#move"/></svg>Move</button>
        <button class="cmd"><svg><use href="#copy"/></svg>Copy</button>
        <button class="cmd"><svg><use href="#stretch"/></svg>Stretch</button>
        <button class="cmd"><svg><use href="#rotate"/></svg>Rotate</button>
        <button class="cmd"><svg><use href="#mirror"/></svg>Mirror</button>
        <button class="cmd"><svg><use href="#scale"/></svg>Scale</button>
        <button class="cmd"><svg><use href="#trim"/></svg>Trim<i class="car"></i></button>
        <button class="cmd"><svg><use href="#fillet"/></svg>Fillet<i class="car"></i></button>
        <button class="cmd"><svg><use href="#array"/></svg>Array<i class="car"></i></button>
        <button class="cmd" aria-label="Erase"><svg><use href="#erase"/></svg></button>
        <button class="cmd" aria-label="Explode"><svg><use href="#explode"/></svg></button>
        <button class="cmd" aria-label="Offset"><svg><use href="#offset"/></svg></button>
      </div>
      <h2>Modify<i class="car big"></i></h2>
    </div>
    <div class="panel layers">
      <div class="body">
        <button class="large"><svg><use href="#layerp"/></svg>Layer<br>Properties</button>
        <div class="layer-rows">
          <div class="combo"><svg><use href="#bulb"/></svg><svg><use href="#sun"/></svg><svg><use href="#lock"/></svg><span class="chip"></span><select aria-label="Current layer"><option>0</option></select><i class="car big"></i></div>
          <div class="row"><button aria-label="Layer off"><svg><use href="#l1"/></svg></button><button aria-label="Isolate"><svg><use href="#l2"/></svg></button><button aria-label="Freeze"><svg><use href="#l3"/></svg></button><button aria-label="Lock"><svg><use href="#l4"/></svg></button><button class="cmd"><svg><use href="#l5"/></svg>Make Current</button></div>
          <div class="row"><button aria-label="Layers on"><svg><use href="#l6"/></svg></button><button aria-label="Unisolate"><svg><use href="#l7"/></svg></button><button aria-label="Thaw"><svg><use href="#l8"/></svg></button><button aria-label="Unlock"><svg><use href="#l9"/></svg></button><button class="cmd"><svg><use href="#l10"/></svg>Match Layer</button></div>
        </div>
      </div>
      <h2>Layers<i class="car big"></i></h2>
    </div>
    <div class="panel clip">
      <div class="body">
        <button class="large"><svg><use href="#paste"/></svg>Paste<i class="car"></i></button>
        <button class="sq" aria-label="Cut"><svg><use href="#cut"/></svg></button>
        <button class="sq" aria-label="Copy"><svg><use href="#copyc"/></svg></button>
        <button class="sq" aria-label="Paste special"><svg><use href="#pspec"/></svg></button>
      </div>
      <h2>Clipboard</h2>
    </div>
    <div class="panel touch">
      <div class="body"><button class="large"><svg><use href="#touch"/></svg>Select<br>Mode</button></div>
      <h2>Touch</h2>
    </div>
  </section>

  <nav class="files">
    <button>Start</button>
    <button>Drawing1*<i>✕</i></button>
    <button class="on">PRÁCTICA*<i>✕</i></button>
    <button class="add" aria-label="New drawing">+</button>
  </nav>

  <main class="work">
    <aside class="toolspace">
      <div class="ts-main">
        <h2>TOOLSPACE</h2>
        <div class="ts-bar">
          <button aria-label="Item view"><svg><use href="#ts-item"/></svg></button>
          <button aria-label="Tree view"><svg><use href="#ts-tree"/></svg></button>
          <button aria-label="Panorama"><svg><use href="#ts-pane"/></svg></button>
          <button class="q" aria-label="Help"><b>?</b></button>
        </div>
        <select class="ts-view" aria-label="View"><option>Active Drawing View</option></select>
        <ul class="tree">
          <li class="root"><button class="ex" aria-label="Collapse">−</button><svg><use href="#t-dwg"/></svg><b>PRÁCTICA</b></li>
          <li><span class="dot"></span><svg><use href="#t-pt"/></svg>Points</li>
          <li><button class="ex" aria-label="Expand">+</button><svg><use href="#t-pg"/></svg>Point Groups</li>
          <li><button class="ex" aria-label="Expand">+</button><svg><use href="#t-sf"/></svg>Surfaces</li>
          <li><button class="ex" aria-label="Expand">+</button><svg><use href="#t-al"/></svg>Alignments</li>
          <li><span class="st"></span><svg><use href="#t-fl"/></svg>Feature Lines</li>
          <li><span class="st"></span><svg><use href="#t-si"/></svg>Sites</li>
          <li><span class="st"></span><svg><use href="#t-ca"/></svg>Catchments</li>
          <li><button class="ex" aria-label="Expand">+</button><svg><use href="#t-pn"/></svg>Pipe Networks</li>
          <li><span class="st"></span><svg><use href="#t-pn"/></svg>Pressure Networks</li>
          <li><span class="st"></span><svg><use href="#t-co"/></svg>Corridors</li>
          <li><button class="ex" aria-label="Expand">+</button><svg><use href="#t-as"/></svg>Assemblies</li>
          <li><span class="st"></span><svg><use href="#t-in"/></svg>Intersections</li>
          <li><button class="ex" aria-label="Expand">+</button><svg><use href="#t-su"/></svg>Survey</li>
          <li class="end"><span class="st"></span><svg><use href="#t-vf"/></svg>View Frame Groups</li>
          <li class="root"><button class="ex" aria-label="Collapse">−</button><svg><use href="#t-sc"/></svg>Data Shortcuts []</li>
          <li class="sub"><span class="st"></span><svg><use href="#t-sf"/></svg>Surfaces</li>
          <li class="sub"><button class="ex" aria-label="Expand">+</button><svg><use href="#t-al"/></svg>Alignments</li>
          <li class="sub"><span class="st"></span><svg><use href="#t-pn"/></svg>Pipe Networks</li>
          <li class="sub"><span class="st"></span><svg><use href="#t-pn"/></svg>Pressure Networks</li>
          <li class="sub"><span class="st"></span><svg><use href="#t-co"/></svg>Corridors</li>
          <li class="sub end"><span class="st"></span><svg><use href="#t-vf"/></svg>View Frame Groups</li>
        </ul>
        <div class="preview"></div>
      </div>
      <nav class="side">
        <button class="on">Prospector</button><button>Settings</button><button>Survey</button><button>Toolbox</button>
      </nav>
    </aside>

    <section class="stage">
      <div class="canvas">
        <svg class="drawing" role="img" aria-label="Surface drawing">
          <defs>
            <pattern id="minor" width="6.226" height="6.530" patternUnits="userSpaceOnUse" x="9" y="5"><path d="M.5 0v7M0 .5h7" stroke="#0f1012" stroke-width="1"/></pattern>
            <pattern id="major" width="31.130" height="32.650" patternUnits="userSpaceOnUse" x="9" y="5"><path d="M.5 0v33M0 .5h32" stroke="#26282b" stroke-width="1"/></pattern>
          </defs>
          <rect width="100%" height="100%" fill="#000"/>
          <rect width="100%" height="100%" fill="url(#minor)"/>
          <rect width="100%" height="100%" fill="url(#major)"/>
          <g transform="translate(-4 57) scale(.3333)" fill="none" stroke-width="4" stroke-linejoin="round">
            <path d="M136 941L240 537 316 222Q330 190 375 172L510 122 640 72 696 57 715 70 880 143 940 182 980 235 1020 290 1052 345 1075 400 1117 515 1018 700 978 775 926 972 812 955 700 940z" fill="#9557c7" stroke="#5cc7a0"/>
            <path d="M240 537L316 222Q330 190 375 172L510 122 640 72 696 57 715 70 880 143 940 182 978 232 968 240 905 195 790 250 560 387 450 450 430 465 370 532z" fill="#14fc7d"/>
            <path d="M240 535h90q40 2 50-10L430 465q15-14 40-28L560 387 790 250 905 195 968 240 980 235" stroke="#bb9fd0"/>
            <path d="M540 938L642 926Q655 910 666 884 675 876 692 876L905 655Q918 645 927 638 925 650 905 680 870 730 850 765 815 815 790 850 790 890 812 955L700 940z" fill="#539e99" stroke="#b4a5c0"/>
            <path d="M998 562Q1000 550 1010 540L1060 486Q1085 468 1098 486L1117 515 1018 632Q1012 625 1012 598 1005 580 998 562z" fill="#539e99" stroke="#b29bc0"/>
            <path d="M298 302q35 0 70-14Q500 215 560 180T695 94q12-10 18-28" stroke="#5eec9c"/>
            <path d="M262 448h26q8-4 18-16L560 285 700 195 820 133 828 123" stroke="#6a6a2a"/>
            <path d="M206 682Q270 635 305 620 340 617 385 622 440 625 463 606 490 585 560 500 580 482 610 466L750 392 840 337 925 289q35 35 50 34 20-3 45-33" stroke="#c50c48"/>
            <path d="M170 817L258 803Q262 792 300 780 360 755 390 729 415 705 440 704L520 707Q540 703 560 682L700 530Q720 510 748 498L840 445 947 382q25 22 40 21Q1005 390 1046 338" stroke="#b697d7"/>
            <path d="M146 908L450 864Q458 858 464 838 475 832 510 818L550 790 605 791Q620 785 640 765L840 555Q860 532 895 515L970 475q15 16 25 7Q1030 435 1073 398" stroke="#c50c48"/>
            <g fill="#c41fd0" stroke="none">
              <path d="M710 56h25v5h-25zM890 145h22v5h-22zM908 155h24v5h-24zM945 178h26v5h-26zM975 212h26v5h-26zM1030 282h26v5h-26zM1068 348h24v5h-24zM1088 401h26v5h-26zM1130 516h26v5h-26zM1000 735h22v5h-22zM990 777h24v5h-24zM938 970h26v5h-26zM1110 530h10v4h-10z"/>
              <path fill="#ffe45d" d="M706 47h8v8h-8zM643 64h8v7h-8zM466 131h8v7h-8zM390 161h8v7h-8zM887 134h8v8h-8zM905 146h8v8h-8zM944 169h8v8h-8zM975 202h9v8h-9zM1029 273h9v8h-9zM1066 338h8v8h-8zM1087 392h8v8h-8zM1129 506h8v8h-8zM987 768h8v7h-8zM937 961h8v7h-8z"/>
              <path fill="#2be94b" d="M945 186h17v4h-17zM976 218h18v4h-18zM1030 289h17v4h-17zM1066 355h17v4h-17zM1088 410h16v4h-16zM1131 523h16v4h-16zM995 742h15v4h-15zM985 785h17v4h-17zM936 980h16v4h-16zM148 949h16v5h-16zM702 942h6v7h-6z"/>
            </g>
          </g>
          <g fill="none" stroke="#cfcfcf"><path d="M12.500 446V407M16 450.500h38M8.500 446.500h8v8h-8zM14 394l4 5v6M22 394l-4 5M57 440l9 9M66 440l-9 9"/></g>
        </svg>
        <p class="view-label">[−][Top][2D Wireframe]</p>

        <table class="elev">
          <caption>TABLA&nbsp; DE&nbsp; ELEVACIONES</caption>
          <colgroup><col class="c1"><col class="c2"><col class="c3"><col class="c4"><col class="c5"></colgroup>
          <thead><tr><th>NÚMERO</th><th>ELEVACIÓN MPINIMA</th><th>ELEVACIÓN MÁXIMA</th><th>ÁREA</th><th>COLOR</th></tr></thead>
          <tbody>
            <tr><td>1</td><td>2720.00</td><td>2722.00</td><td>2680.40</td><td><i class="sw green"></i></td></tr>
            <tr><td>2</td><td>2722.00</td><td>2724.00</td><td>7814.42</td><td><i class="sw purple"></i></td></tr>
            <tr><td>3</td><td>2724.00</td><td>2726.00</td><td class="low">495.41</td><td><i class="sw teal"></i></td></tr>
          </tbody>
        </table>
        <svg class="cross" viewBox="0 0 66 68"><path d="M32.500 0v31M32.500 36v32M0 33.500h30M35 33.500h31M30.500 30.500h4v6h-4z" fill="none" stroke="#e8e8e8"/></svg>

        <div class="cube">
          <span class="n">N</span><span class="w">W</span><button>TOP</button><span class="e">E</span><span class="s">S</span>
        </div>
        <button class="wcs">WCS</button>
        <div class="navbar" aria-hidden="true">
          <svg viewBox="0 0 28 182"><g fill="none" stroke="#363636" stroke-width="1.300"><circle cx="13" cy="24" r="9"/><circle cx="13" cy="24" r="5"/><path d="M7 60q-3-8 0-7l3 3v-8l3 5v-7l3 7 1-5 1 12q-3 8-8 5zM6 75l14 14M20 75L6 89M13 72v20M6 118h14M13 108v20M9 112l4-4 4 4M9 124l4 4 4-4M4 145h5v5H4zM11 145h5v5h-5zM18 145h5v5h-5zM5 156h16v12H5zM10 159l6 3-6 3z"/></g></svg>
        </div>
      </div>
      <div class="snapbar">
        <i class="grip"></i>
        <button aria-label="Bearing distance"><svg><use href="#r1"/></svg></button>
        <button aria-label="Azimuth distance"><svg><use href="#r2"/></svg></button>
        <button aria-label="Deflection"><svg><use href="#r3"/></svg></button>
        <button aria-label="Northing easting"><svg><use href="#r4"/></svg></button>
        <button aria-label="Grid northing"><svg><use href="#r5"/></svg></button>
        <button aria-label="Latitude longitude"><svg><use href="#r6"/></svg></button>
        <button aria-label="Globe"><svg><use href="#r7"/></svg></button>
        <button aria-label="Point number"><svg><use href="#r8"/></svg></button>
        <button aria-label="Point name"><svg><use href="#r9"/></svg></button>
        <button aria-label="Point object"><svg><use href="#r10"/></svg></button>
        <button aria-label="Zoom to point"><svg><use href="#r8"/></svg></button>
        <button aria-label="Side shot"><svg><use href="#r12"/></svg></button>
        <button aria-label="Station offset"><svg><use href="#r13"/></svg></button>
        <hr>
        <button aria-label="Point tools"><svg><use href="#r11"/></svg></button>
        <hr>
        <button aria-label="Station"><svg><use href="#r14"/></svg></button>
        <button aria-label="Profile station"><svg><use href="#r15"/></svg></button>
        <button aria-label="Point station"><svg><use href="#r15"/></svg></button>
        <hr>
        <button aria-label="Distance"><svg><use href="#r16"/></svg></button>
        <button aria-label="Angle"><svg><use href="#r17"/></svg></button>
        <button aria-label="Area"><svg><use href="#r19"/></svg></button>
        <button aria-label="Slope"><svg><use href="#r20"/></svg></button>
        <button aria-label="Surface"><svg><use href="#r18"/></svg></button>
        <button aria-label="Edit"><svg><use href="#erase"/></svg></button>
      </div>
      <div class="command">
        <div class="cmd-tools"><i class="dots"></i><button aria-label="Close"><svg><use href="#close-b"/></svg></button><button aria-label="Customize"><svg><use href="#wrench"/></svg></button></div>
        <output>Surface:&nbsp; TOPOGRAFÍA</output>
        <label class="prompt"><span class="ico">&gt;_</span><i class="car dark"></i><input type="text" placeholder="Type a command" aria-label="Command"></label>
      </div>
    </section>
  </main>

  <nav class="layouts">
    <button class="on">Model</button><button>Layout1</button><button>Layout2</button><button class="add" aria-label="New layout">+</button>
  </nav>

  <footer class="status">
    <div><button>MODEL</button></div>
    <div><button aria-label="Grid"><svg><use href="#s-grid"/></svg></button><button aria-label="Snap"><svg><use href="#s-snap"/></svg></button><i class="car big"></i></div>
    <div><button aria-label="Ortho"><svg><use href="#s-orth"/></svg></button><button aria-label="Polar"><svg><use href="#s-pol"/></svg></button><i class="car big"></i><button aria-label="Isometric"><svg><use href="#s-iso"/></svg></button><i class="car big"></i></div>
    <div><button aria-label="Object tracking"><svg><use href="#s-otr"/></svg></button><button aria-label="Object snap"><svg><use href="#s-osn"/></svg></button><i class="car big"></i></div>
    <div><button aria-label="Lineweight"><svg><use href="#s-lw"/></svg></button></div>
    <div><button class="hl" aria-label="Annotation visibility"><svg><use href="#s-ann2"/></svg></button><button class="dim" aria-label="Auto scale"><svg><use href="#s-ann2"/></svg></button><button class="dim" aria-label="Annotation scale"><svg><use href="#s-ann"/></svg></button><button>1:1000</button><i class="car big"></i></div>
    <div><button class="dim" aria-label="Workspace"><svg><use href="#gear"/></svg></button><i class="car big"></i></div>
    <div><button aria-label="Annotation monitor"><svg><use href="#s-plus"/></svg></button></div>
    <div><button aria-label="Elevation"><svg><use href="#s-elev"/></svg></button><button>3.500</button></div>
    <div><button aria-label="Isolate objects"><svg><use href="#s-iso2"/></svg></button></div>
    <div><button aria-label="Hardware acceleration"><svg><use href="#s-hw"/></svg></button></div>
    <div><button aria-label="Geolocation"><svg><use href="#s-map"/></svg></button></div>
    <div><button aria-label="Clean screen"><svg><use href="#s-full"/></svg></button><button aria-label="Customization"><svg><use href="#s-menu"/></svg></button></div>
  </footer>
</div>
</body>
</html>
```

FILE: styles.css
```css
* { box-sizing: border-box; }
body {
  margin: 0;
  background: #383838;
  color: #ececec;
  font: 10px/14px Lato, "Noto Sans", sans-serif;
}
button, input, select {
  margin: 0; padding: 0; border: 0;
  background: none; color: inherit; font: inherit;
  appearance: none; border-radius: 0;
  white-space: nowrap;
}
button { display: flex; align-items: center; }
h1, h2, p, ul { margin: 0; padding: 0; font: inherit; }
svg { width: 16px; height: 16px; flex: none; display: block; }
.sprite { position: absolute; width: 0; height: 0; }
.car {
  display: inline-block; flex: none;
  border: 2px solid transparent; border-top: 3px solid #eee; border-bottom: 0;
}
.car.big { border-width: 4px 3px 0; }
.car.dark { border-top-color: #333; }

.app { position: relative; display: flex; flex-direction: column; min-height: 100vh; }
.app-menu {
  position: absolute; left: 0; top: 0; z-index: 2;
  width: 33px; height: 34px;
  background: linear-gradient(#989898, #6e6e6e);
  border: 1px solid #3a3a3a; border-left: 0;
}
.app-menu b { position: absolute; left: 8px; bottom: 0; font-size: 7px; line-height: 8px; color: #111; }
.app-menu svg { width: 26px; height: 24px; margin: 0 0 6px; }
.app-menu .car { margin-bottom: 2px; }

/* title bar */
.title {
  display: grid; height: 20px;
  grid-template-columns: 145fr 149fr 14fr 434fr 8fr 150fr 210fr 137fr;
  padding-left: 33px;
  background: linear-gradient(#646464, #8c8c8c);
}
.quick { display: flex; align-items: center; justify-content: space-between; padding: 0 4px 0 6px; }
.quick svg { width: 14px; height: 14px; }
.quick button { gap: 5px; }
.workspace { display: flex; align-items: center; gap: 3px; padding: 0 3px; background: #4a4a4a; border: 1px solid #373737; }
.workspace select { flex: 1; }
.workspace svg { width: 13px; height: 13px; }
.more { justify-content: center; }
.title h1 {
  display: flex; justify-content: center; align-items: center; gap: 11px;
  background: #15e76a; color: #123d1f; white-space: nowrap;
}
.play { justify-content: center; }
.play::before { content: ""; border: 3px solid transparent; border-left: 4px solid #eee; border-right: 0; }
.search { min-width: 0; width: 100%; padding: 0 2px; background: #565656; border: 1px solid #3b3b3b; font-style: italic; }
.search::placeholder { color: #c0c0c0; opacity: 1; }
.account { display: flex; align-items: center; gap: 5px; padding: 0 4px 0 2px; background: linear-gradient(#8d8d8d, #a0a0a0); }
.account button { gap: 5px; }
.account .sign { width: 96px; }
.account .sign .car { margin-left: auto; }
.account svg { width: 14px; height: 14px; }
.account .help { margin-left: auto; }
.help b { width: 13px; height: 13px; border-radius: 50%; background: #f4f6ff; color: #2b55b0; border: 1px solid #445; line-height: 11px; text-align: center; }
.win { display: flex; align-items: center; justify-content: space-around; padding-left: 17px; background: #15e76a; color: #12401f; }

/* menu bar */
.menus {
  display: grid; align-items: center; height: 19px;
  grid-template-columns: 33fr 35fr 39fr 41fr 47fr 39fr 39fr 50fr 68fr 48fr 53fr 67fr 50fr 58fr 54fr 37fr 58fr 44fr 54fr 283fr 40fr;
  padding-left: 43px;
  background: linear-gradient(#919191, #5c5c5c);
  border-bottom: 1px solid #404040;
}
.menus > button { min-width: 0; }
.docwin { display: flex; justify-content: flex-end; gap: 3px; padding-right: 2px; color: #1e1e1e; }
.docwin svg { width: 11px; height: 11px; }

/* ribbon tabs */
.tabs {
  display: grid; height: 17px;
  grid-template-columns: 41fr 42fr 58fr 48fr 50fr 38fr 52fr 46fr 46fr 76fr 106fr 38fr 50fr 75fr 81fr 69fr 30fr 332fr;
  padding-left: 2px;
  background: #4b4b4b; color: #c8c8c8;
  border-bottom: 1px solid #3c3c3c;
}
.tabs button { min-width: 0; padding-left: 8px; }
.tabs .on { padding-left: 7px; background: linear-gradient(#707070, #5c5c5c); color: #f0f0f0; border: 1px solid #858585; border-bottom: 0; }
.tabs .geo { padding-left: 7px; background: linear-gradient(#5a6268, #6a6a70); border: 1px solid #40697c; color: #e8e8e8; }
.tabs .pill { padding-left: 19px; gap: 6px; }
.pill i:first-child { width: 11px; height: 7px; flex: none; border-radius: 2px; background: #e6e6e6; border: 3px solid #e6e6e6; border-bottom-color: #999; }

/* ribbon */
.ribbon {
  display: grid; height: 87px;
  grid-template-columns: 95fr 108fr 268fr 112fr 99fr 210fr 227fr 66fr 36fr 59fr;
  background: linear-gradient(#5a5a5a, #3e3e3e);
  border-bottom: 1px solid #6e6e6e;
}
.panel { display: flex; flex-direction: column; min-width: 0; background: #5b5b5b; border-right: 1px solid #484848; }
.panel .body { flex: 1; display: grid; grid-template-rows: repeat(3, 1fr); grid-auto-flow: column; padding: 3px 0 2px 3px; justify-content: start; align-items: center; }
.panel h2 { display: flex; align-items: center; justify-content: center; gap: 5px; height: 16px; background: #4a4a4a; white-space: nowrap; }
.cmd { gap: 3px; }
.cmd .car { margin-left: 2px; }
.large { grid-row: 1 / 4; flex-direction: column; line-height: 14px; align-self: stretch; }
.large svg { width: 26px; height: 26px; margin: 2px 0 3px; }
.palettes .body { padding-left: 2px; grid-template-columns: 49px 20px 20px; }
.palettes .large { margin-bottom: 4px; padding-top: 1px; border: 1px solid #86a5d8; background: linear-gradient(#4b6799, #6c90cf); }
.palettes .large svg { margin: 0 0 4px; }
.sq { justify-content: center; width: 19px; height: 19px; justify-self: center; }
.lit { border: 1px solid #7690bf; background: #486294; }
.ground .body { padding-left: 19px; }
.design .body { grid-template-columns: 88px 83px auto; }
.views .body { padding-left: 9px; }
.draw .body { grid-template-columns: 31px 33px auto; }
.draw .cmd { gap: 1px; }
.modify .body { grid-template-columns: 60px 59px 64px auto; }
.layers .body { display: flex; gap: 3px; align-items: stretch; justify-content: stretch; }
.layers .large { width: 46px; }
.layers .large svg { margin: 1px 0 4px; width: 28px; height: 28px; }
.layer-rows { flex: 1; display: grid; grid-template-rows: repeat(3, 1fr); align-items: center; padding-right: 1px; }
.combo { display: flex; align-items: center; gap: 3px; height: 20px; padding: 0 3px 0 1px; border: 1px solid #3c3c3c; background: #505050; }
.combo svg { width: 13px; height: 13px; }
.combo select { flex: 1; min-width: 0; }
.chip { width: 12px; height: 12px; background: #fff; border: 1px solid #222; }
.row { display: flex; gap: 4px; padding-left: 2px; }
.clip .body { grid-template-columns: 39px 20px; }
.clip .large svg { width: 28px; height: 28px; margin: 0 0 7px; }
.clip .large .car { margin-top: 3px; }
.touch .body { padding: 3px 0 2px; justify-content: center; background: #616161; }
.touch .large svg { margin-bottom: 5px; }
.touch h2 { border-bottom: 1px solid #3f7390; }

/* drawing tabs */
.files { display: flex; align-items: flex-end; height: 25px; padding: 0 0 4px 14px; border-bottom: 3px solid #575757; background: #383838; }
.files button {
  width: 103px; height: 18px; padding: 0 10px 0 12px;
  background: linear-gradient(#585858, #484848); color: #b5b5b5;
  border-radius: 9px 9px 0 0;
  clip-path: polygon(0 100%, 7px 0, calc(100% - 9px) 0, 100% 100%);
}
.files button i { margin-left: auto; font: 9px/14px "DejaVu Sans", sans-serif; color: #262626; }
.files .on { background: linear-gradient(#858585, #626262); color: #fff; }
.files .add { width: 17px; height: 15px; margin-left: 9px; padding: 0; justify-content: center; font-size: 14px; font-weight: bold; border-radius: 4px; clip-path: none; }

/* work area */
.work { flex: 1; display: grid; grid-template-columns: 204px 1fr; background: #575757; min-height: 512px; }
.toolspace { display: grid; grid-template-columns: 183px 21px; }
.ts-main { display: flex; flex-direction: column; min-height: 0; padding-bottom: 5px; }
.ts-main h2 { padding: 4px 12px; height: 22px; background: #4e4e4e; font-size: 11px; }
.ts-bar { display: flex; gap: 5px; padding: 5px 3px; align-items: center; height: 25px; }
.ts-bar svg { width: 14px; height: 14px; }
.ts-bar button:nth-child(2) { margin-left: auto; }
.ts-bar button { width: 16px; }
.ts-bar .q b { width: 11px; height: 11px; margin-left: 3px; background: #eee; color: #222; line-height: 11px; font-size: 9px; text-align: center; }
.ts-view {
  height: 17px; padding: 0 1px; color: #222; font-size: 9px;
  border: 1px solid #f2f2f2; background-color: #dedede;
  background-image: linear-gradient(45deg, transparent 6px, #555 6px, #555 7px, transparent 7px), linear-gradient(-45deg, transparent 6px, #555 6px, #555 7px, transparent 7px);
  background-size: 5px 9px; background-repeat: no-repeat; background-position: right 6px top 5px, right 1px top 5px;
}
.tree { flex: 1; display: grid; grid-auto-rows: 1fr; list-style: none; margin-top: 2px; padding: 1px 0 0; background: #fff; color: #1c1c1c; }
.tree li { position: relative; display: flex; align-items: center; gap: 2px; padding-left: 17px; }
.tree li > * { position: relative; }
.tree svg { width: 13px; height: 13px; margin-left: 2px; }
.tree li.root { padding-left: 4px; }
.tree b { font-size: 11px; }
.tree li:not(.root)::before { content: ""; position: absolute; left: 21px; top: 0; bottom: 0; border-left: 1px dotted #888; }
.tree li.end::before { bottom: 50%; }
.tree li:not(.sub)::after { content: ""; position: absolute; left: 8px; top: 0; bottom: 0; border-left: 1px dotted #888; }
.tree li.root::after { top: 50%; }
.tree li.root ~ li.root::after { top: 0; bottom: 50%; }
.tree .ex { width: 9px; height: 9px; z-index: 1; justify-content: center; border: 1px solid #999; background: #fff; font-size: 9px; line-height: 7px; color: #333; }
.tree .dot { width: 5px; height: 5px; margin: 0 2px; border-radius: 50%; background: #111; }
.tree .st { width: 5px; margin-left: 4px; border-top: 1px dotted #888; }
.preview { height: 66px; margin: 5px 0 0; border: 1px solid #8a8a8a; border-left: 0; }
.side { display: grid; grid-template-rows: repeat(4, 112px); padding-top: 23px; border-right: 2px solid #6a6a6a; font-size: 11px; }
.side button { writing-mode: vertical-rl; transform: rotate(180deg); justify-content: center; border: 1px solid #444; color: #aaa; background: #4d4d4d; }
.side .on { background: #5d5d5d; color: #ddd; }

.stage { display: grid; grid-template-columns: 1fr 26px; grid-template-rows: 1fr 48px; min-width: 0; }
.canvas { position: relative; overflow: hidden; background: #000; }
.drawing { position: absolute; inset: 0; width: 100%; height: 100%; }
.view-label { position: absolute; left: 2px; top: 4px; color: #ddd; }
.elev {
  position: absolute; left: 584px; top: 149px; width: 347px;
  border-collapse: collapse; table-layout: fixed;
  font: 10px/12px Roboto, sans-serif; text-align: center; white-space: nowrap;
}
.elev caption { height: 27px; line-height: 27px; font-size: 14px; font-weight: 300; color: #c00d20; border: 1px solid #1414b4; border-bottom: 0; }
.elev .c1 { width: 49px; } .elev .c2 { width: 105px; } .elev .c3 { width: 102px; } .elev .c4 { width: 49px; } .elev .c5 { width: 42px; }
.elev th, .elev td { height: 20px; padding: 0; border: 1px solid #a10d1e; font-weight: 400; }
.elev tr > :first-child { border-left-color: #1414b4; }
.elev tr > :last-child { border-right-color: #1414b4; }
.elev tbody tr:last-child td { border-bottom-color: #1414b4; }
.elev th { color: #2fe63e; }
.elev td { color: #2d7fd8; font-size: 11px; }
.elev .low { text-align: left; padding-left: 5px; }
.sw { display: block; width: 13px; height: 13px; margin: auto; }
.green { background: #14fc7d; } .purple { background: #9557c7; } .teal { background: #539e99; }
.cross { position: absolute; left: 623px; top: 190px; width: 66px; height: 68px; }
.cube {
  position: absolute; right: 14px; top: 17px; width: 74px; height: 74px;
  border: 8px solid #303030; border-radius: 50%;
  font: bold 12px/14px "Liberation Sans", sans-serif; color: #c6c6c6;
}
.cube span { position: absolute; }
.cube .n { left: 25px; top: -14px; } .cube .s { left: 25px; bottom: -15px; }
.cube .w { left: -12px; top: 22px; } .cube .e { right: -10px; top: 22px; }
.cube button { position: absolute; left: 13px; top: 13px; width: 32px; height: 33px; justify-content: center; background: #b4b4b8; color: #3c3c44; font: bold 8px/12px Lato, sans-serif; }
.wcs { position: absolute; right: 32px; top: 111px; width: 38px; height: 14px; padding-left: 3px; border-radius: 4px; background: #8a8a90; border: 1px solid #aaa; color: #ddd; }
.navbar { position: absolute; right: 1px; top: 147px; width: 28px; height: 182px; border-radius: 3px; background: #484848; border: 1px solid #555; }
.navbar svg { width: 100%; height: 100%; }
.snapbar { display: flex; flex-direction: column; align-items: center; justify-content: space-between; padding: 3px 0 0; background: #5d5d5d; border-left: 2px solid #3c3c3c; overflow: hidden; }
.snapbar svg { width: 14px; height: 16px; }
.snapbar hr { width: 17px; height: 2px; margin: 0; border: 0; background: #c4c4c4; }
.grip { width: 14px; height: 4px; border-top: 1px dotted #999; border-bottom: 1px dotted #999; }

.command { grid-column: 1 / 3; display: grid; grid-template-columns: 18px 1fr; grid-template-rows: 1fr 18px; border-top: 2px solid #777; background: #c5c5c5; color: #222; font: 10px/14px "DejaVu Sans Mono", monospace; }
.cmd-tools { grid-row: 1 / 3; display: flex; flex-direction: column; align-items: center; justify-content: space-between; background: #565656; color: #fff; padding: 3px 0 1px; }
.cmd-tools svg { width: 13px; height: 13px; }
.cmd-tools button:nth-child(2) svg { width: 10px; height: 10px; }
.dots { width: 14px; height: 5px; border-top: 2px dotted #aaa; border-bottom: 2px dotted #aaa; }
.command output { align-self: end; padding: 0 3px 2px; }
.prompt { display: flex; align-items: center; gap: 3px; padding-left: 4px; background: #fff; border-top: 1px solid #a8a8a8; }
.prompt .ico { width: 13px; height: 12px; border: 1px solid #999; border-radius: 2px; background: #ddd; font-size: 8px; line-height: 10px; text-align: center; }
.prompt input { flex: 1; padding-left: 4px; font-style: italic; }
.prompt input::placeholder { color: #888; opacity: 1; }

/* layout tabs */
.layouts { display: flex; height: 18px; padding-left: 9px; }
.layouts button { width: 54px; height: 16px; justify-content: center; color: #aaa; background: #4f4f4f; border-radius: 0 0 7px 7px; clip-path: polygon(0 0, 100% 0, calc(100% - 5px) 100%, 6px 100%); }
.layouts .on { width: 48px; background: linear-gradient(#4c4c4c, #7a7a7a); color: #fff; font-weight: bold; }
.layouts .add { width: 24px; color: #ccc; font-size: 12px; font-weight: bold; }

/* status bar */
.status {
  display: grid; justify-content: end; height: 22px;
  grid-template-columns: 42px 55px 86px 53px 22px 105px 34px 23px 55px 22px 22px 21px 41px;
}
.status div { display: flex; align-items: center; justify-content: space-around; background: #4d4d4d; border: 1px solid #666; border-right: 0; border-bottom: 0; color: #eee; padding: 0 1px; }
.status svg { width: 14px; height: 14px; }
.status .hl { color: #2b85ee; }
.status .dim { color: #bcbcbc; }
```
